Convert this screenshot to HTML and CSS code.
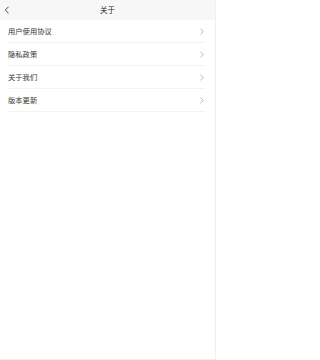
FILE: index.html
```html
<!DOCTYPE html>
<html lang="zh">
<head>
<meta charset="utf-8">
<link rel="stylesheet" href="styles.css">
</head>
<body>
<div class="page">
  <header class="nav">
    <span class="back"><svg width="6" height="8" viewBox="0 0 6 8"><path d="M4.5 0.8 L1.3 4 L4.5 7.2" fill="none" stroke="#333" stroke-width="0.9"/></svg></span>
    <span class="title">关于</span>
  </header>
  <ul class="list">
    <li class="row"><span>用户使用协议</span><svg class="chev" width="4" height="7" viewBox="0 0 4 7"><path d="M0.6 0.6 L3.2 3.5 L0.6 6.4" fill="none" stroke="#999" stroke-width="0.7"/></svg></li>
    <li class="row"><span>隐私政策</span><svg class="chev" width="4" height="7" viewBox="0 0 4 7"><path d="M0.6 0.6 L3.2 3.5 L0.6 6.4" fill="none" stroke="#999" stroke-width="0.7"/></svg></li>
    <li class="row"><span>关于我们</span><svg class="chev" width="4" height="7" viewBox="0 0 4 7"><path d="M0.6 0.6 L3.2 3.5 L0.6 6.4" fill="none" stroke="#999" stroke-width="0.7"/></svg></li>
    <li class="row"><span>版本更新</span><svg class="chev" width="4" height="7" viewBox="0 0 4 7"><path d="M0.6 0.6 L3.2 3.5 L0.6 6.4" fill="none" stroke="#999" stroke-width="0.7"/></svg></li>
  </ul>
</div>
</body>
</html>
```
FILE: styles.css
```css
html, body {
  margin: 0;
  padding: 0;
  background: #ffffff;
}
body {
  font-family: "Noto Sans CJK SC", "Noto Sans", sans-serif;
}
.page {
  width: 215px;
  height: 359px;
  border-right: 1px solid #efefef;
  border-bottom: 1px solid #efefef;
  background: #ffffff;
}
.nav {
  height: 20px;
  background: #f7f7f7;
  display: grid;
  grid-template-columns: 20px 1fr 20px;
  align-items: center;
}
.back {
  display: flex;
  align-items: center;
  padding-left: 4px;
  height: 20px;
}
.title {
  text-align: center;
  font-size: 7.5px;
  color: #222;
  line-height: 20px;
}
.list {
  list-style: none;
  margin: 0;
  padding: 0;
}
.row {
  margin: 0 10px 0 8px;
  height: 22px;
  border-bottom: 1px solid #f3f3f3;
  display: flex;
  align-items: center;
  justify-content: space-between;
  font-size: 7.3px;
  color: #333;
}
.chev {
  margin-right: 1px;
}
```
